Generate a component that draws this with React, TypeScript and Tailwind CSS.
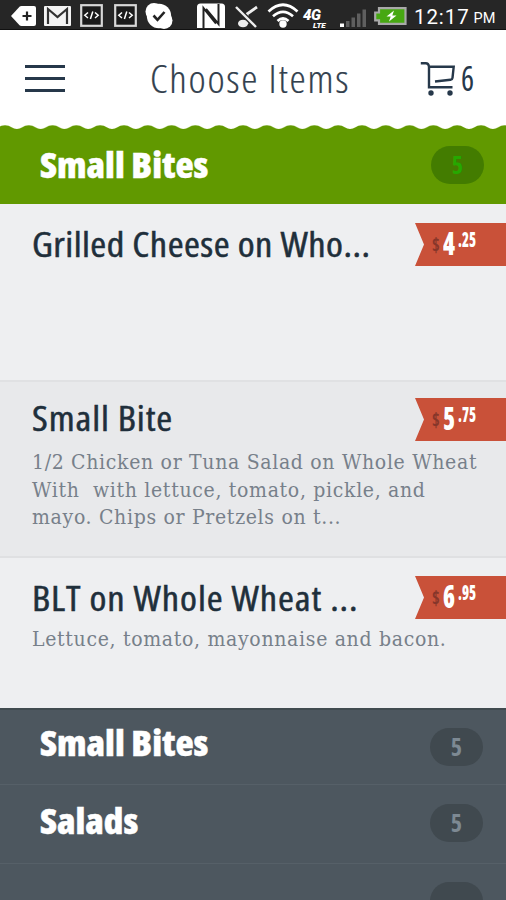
import type { ReactNode } from "react";
import clsx from "clsx";

interface MenuItem {
  name: string;
  dollars: string;
  cents: string;
  lines: string[];
  rowClass: string;
  nameClass: string;
  priceClass: string;
  descClass: string;
}

const items: MenuItem[] = [
  {
    name: "Grilled Cheese on Who...",
    dollars: "4",
    cents: ".25",
    lines: [],
    rowClass: "h-[178px] bg-[#eeeff1] border-b-2 border-[#e0e1e3]",
    nameClass: "mt-5 tracking-[0.4px]",
    priceClass: "mt-[19px]",
    descClass: "",
  },
  {
    name: "Small Bite",
    dollars: "5",
    cents: ".75",
    lines: [
      "1/2 Chicken or Tuna Salad on Whole Wheat",
      "With  with lettuce, tomato, pickle, and",
      "mayo. Chips or Pretzels on t...",
    ],
    rowClass: "h-[176px] bg-[#e8e9eb] border-b-2 border-[#dfe0e2]",
    nameClass: "mt-4 tracking-[0.8px]",
    priceClass: "mt-4",
    descClass: "pt-[10px]",
  },
  {
    name: "BLT on Whole Wheat ...",
    dollars: "6",
    cents: ".95",
    lines: ["Lettuce, tomato, mayonnaise and bacon."],
    rowClass: "h-[150px] bg-[#eeeff1]",
    nameClass: "mt-5 tracking-[0.8px]",
    priceClass: "mt-[18px]",
    descClass: "pt-[11px]",
  },
];

function CodeIcon({ className }: { className?: string }) {
  return (
    <svg viewBox="0 0 23 23" className={clsx("h-[23px] w-[23px] shrink-0", className)} fill="none">
      <rect x="1.2" y="1.2" width="20.6" height="20.6" fill="#1b1b1b" stroke="#d8d8d8" strokeWidth="2.2" />
      <path d="M8 8.5 4.8 11.3 8 14M15 8.5l3.2 2.8L15 14M12.8 7.5l-2.4 7.5" stroke="#fff" strokeWidth="1.5" />
    </svg>
  );
}

function StatusBar() {
  return (
    <div className="flex h-[30px] items-start overflow-hidden border-b border-[#111] bg-[#262626] pt-1 pl-[11px] text-white">
      <svg viewBox="0 0 25 20" className="mt-[2px] h-5 w-[25px] shrink-0">
        <path d="M0 10 8.5.8Q9.3 0 10.5 0H23q2 0 2 2v16q0 2-2 2H10.500Q9.300 20 8.500 19.200Z" fill="#fff" />
        <path d="M16 5.500v9M11.500 10h9" stroke="#222" strokeWidth="2.200" />
      </svg>
      <svg viewBox="0 0 27 20" className="mt-[2px] ml-2 h-5 w-[27px] shrink-0">
        <rect width="27" height="20" rx="1" fill="#f4f4f4" />
        <path d="M4 18V3l9.500 8L23 3v15" fill="none" stroke="#333" strokeWidth="2.200" />
      </svg>
      <CodeIcon className="ml-[9px]" />
      <CodeIcon className="ml-[11px]" />
      <svg viewBox="0 0 28 26" className="-mt-[1px] ml-2 h-[26px] w-7 shrink-0">
        <circle cx="9" cy="8.500" r="8.500" fill="#fff" />
        <circle cx="19" cy="17.500" r="8.500" fill="#fff" />
        <circle cx="14" cy="13" r="12.200" fill="#fff" />
        <path d="m8.500 12.500 4 4.300 7-7.800" fill="none" stroke="#222" strokeWidth="2.600" />
      </svg>
      <svg viewBox="0 0 28 26" className="-mt-[1px] ml-6 h-[26px] w-7 shrink-0">
        <path d="M0 25V4Q0 .5 3.500.5H24.500Q28 .5 28 4v21Z" fill="#fff" />
        <path d="M6.500 25V5L19 20.500M21.500 1v20L9 6" fill="none" stroke="#222" strokeWidth="2" />
      </svg>
      <svg viewBox="0 0 25 24" className="ml-[9px] h-6 w-[25px] shrink-0" fill="none">
        <path d="M13 20V10l10-7" stroke="#eee" strokeWidth="2.800" />
        <ellipse cx="9" cy="19.500" rx="5" ry="3.800" fill="#eee" />
        <path d="m2 3 20 20" stroke="#262626" strokeWidth="5" />
        <path d="m2 3 20 20" stroke="#eee" strokeWidth="2.400" />
      </svg>
      <svg viewBox="0 0 32 25" className="-mt-[1px] ml-2 h-[25px] w-8 shrink-0" fill="none" stroke="#fff" strokeWidth="2.700">
        <path d="M1.500 8.500q14.500-13.500 29 0M6 13.300q10-9 20 0M10.500 18q5.500-5 11 0" />
        <circle cx="16" cy="21" r="3.700" fill="#fff" stroke="none" />
      </svg>
      <div className="mt-[5px] ml-1 flex w-[30px] shrink-0 flex-col font-['Roboto',sans-serif] font-black italic [font-stretch:100%]">
        <span className="text-[15px] leading-[13px] tracking-[-0.5px]">4G</span>
        <span className="ml-[10px] text-[8px] leading-[8px]">LTE</span>
      </div>
      <svg viewBox="0 0 27 20" className="mt-1 ml-[7px] h-5 w-[27px] shrink-0" fill="#5f5f5f">
        <path d="M0 15.500h4V19H0z" fill="#fff" />
        <path d="M6 13h3.500v6H6zM11.500 9.500H15V19h-3.500zM17 5.500h3.500V19H17zM22.500 1.500H26V19h-3.500z" />
      </svg>
      <svg viewBox="0 0 33 18" className="mt-[3px] ml-[7px] h-[18px] w-[33px] shrink-0">
        <path d="M5 1.200h26.500v15.600H5v-3.500H1.200V5.500H5Z" fill="#47a812" stroke="#a9a9a9" strokeWidth="2.200" />
        <path d="m20 3.500-7.500 6h4.200L15 14.500l7.500-6h-4.200Z" fill="#fff" />
      </svg>
      <span className="ml-[7px] text-[20.500px] leading-[26px] tracking-[0.9px] font-['Roboto',sans-serif] [font-stretch:100%]">12:17</span>
      <span className="ml-1 pt-[1px] text-[14.500px] leading-[27px] font-['Roboto',sans-serif] [font-stretch:100%]">PM</span>
    </div>
  );
}

function Header() {
  return (
    <header className="flex h-[95px] items-start bg-white pl-[25px] text-[#26384a]">
      <div className="mt-[35px] flex w-10 shrink-0 flex-col gap-[9px]">
        <div className="h-[3px] bg-[#26384a]" />
        <div className="h-[3px] bg-[#26384a]" />
        <div className="h-[3px] bg-[#26384a]" />
      </div>
      <h1 className="mt-7 ml-[85px] w-[270px] shrink-0 origin-left scale-x-[1.08] text-[38px] leading-10 font-light tracking-[1.600px] whitespace-nowrap text-[#33414e] [-webkit-text-stroke:0.2px]">
        Choose Items
      </h1>
      <svg viewBox="0 0 36 35" className="mt-8 h-[35px] w-9 shrink-0" fill="none" stroke="#26384a" strokeWidth="2.400">
        <path d="M.8 1.300h5q2.700 0 3.200 3.400V25.200h23.500M9 4.800h24.700l-1.200 11q-.2 1.800-2 2L15 19.500" />
        <circle cx="11" cy="31" r="2.700" fill="#26384a" stroke="none" />
        <circle cx="30" cy="31" r="2.700" fill="#26384a" stroke="none" />
      </svg>
      <span className="mt-7 ml-[5px] origin-left scale-x-[0.88] text-[35px] leading-10">6</span>
    </header>
  );
}

function Scallops() {
  return (
    <svg className="block h-[4px] w-full" aria-hidden="true">
      <defs>
        <pattern id="scallop" x="-7" width="23.800" height="4" patternUnits="userSpaceOnUse">
          <path d="M0 4Q3 4 5.500 2.200Q8 .2 12 .2T18.500 2.200Q21 4 23.800 4Z" fill="#619900" />
        </pattern>
      </defs>
      <rect width="100%" height="4" fill="url(#scallop)" />
    </svg>
  );
}

function Pill({ className, children }: { className?: string; children?: ReactNode }) {
  return (
    <span className={clsx("flex h-[38px] w-[53px] shrink-0 items-center justify-center rounded-full text-2xl font-bold", className)}>
      {children}
    </span>
  );
}

function SectionName({ className, children }: { className?: string; children: ReactNode }) {
  return (
    <span
      className={clsx(
        "origin-left scale-x-[1.07] text-[35px] leading-10 font-extrabold whitespace-nowrap text-white [-webkit-text-stroke:0.4px]",
        className
      )}
    >
      {children}
    </span>
  );
}

function PriceTag({ item }: { item: MenuItem }) {
  return (
    <div
      className={clsx(
        "flex h-[43px] w-[91px] shrink-0 items-start bg-[#c95139] pl-[17px] font-extrabold [clip-path:polygon(0_0,100%_0,100%_100%,0_100%,9px_50%)]",
        item.priceClass
      )}
    >
      <span className="mt-[10px] w-[11px] origin-left scale-x-[0.82] text-xl leading-6 font-bold text-[#86362a]">$</span>
      <span className="mt-2 w-[15px] origin-left scale-x-[0.76] text-[32px] leading-6 text-white">{item.dollars}</span>
      <span className="mt-1 origin-left scale-x-[0.68] text-[21px] leading-6 text-white">{item.cents}</span>
    </div>
  );
}

function ItemRow({ item }: { item: MenuItem }) {
  return (
    <div className={clsx("pl-8", item.rowClass)}>
      <div className="flex h-[57px] items-start justify-between">
        <h2
          className={clsx(
            "origin-left scale-x-[1.1] text-[35px] leading-10 font-medium whitespace-nowrap text-[#1f2f3b] [-webkit-text-stroke:0.5px]",
            item.nameClass
          )}
        >
          {item.name}
        </h2>
        <PriceTag item={item} />
      </div>
      <div className={item.descClass}>
        {item.lines.map((line) => (
          <p
            key={line}
            className="font-['DejaVu_Serif_Condensed','DejaVu_Serif',serif] text-[21px] leading-[27.600px] tracking-[0.68px] whitespace-pre text-[#77808a]"
          >
            {line}
          </p>
        ))}
      </div>
    </div>
  );
}

export default function App() {
  return (
    <div className="h-[900px] w-[506px] overflow-hidden bg-white font-['Open_Sans',sans-serif] [font-stretch:75%]">
      <StatusBar />
      <Header />
      <Scallops />
      <div className="flex h-[75px] items-start justify-between bg-[#619900] pr-[22px] pl-10">
        <SectionName className="mt-4">Small Bites</SectionName>
        <Pill className="mt-[17px] bg-[#437c00] text-[#26a800]">5</Pill>
      </div>
      {items.map((item) => (
        <ItemRow key={item.name} item={item} />
      ))}
      <div className="bg-[#4d575f]">
        <div className="flex h-[77px] items-start justify-between border-t-2 border-b border-t-[#414b50] border-b-[#566068] pr-[23px] pl-10">
          <SectionName className="mt-[13px]">Small Bites</SectionName>
          <Pill className="mt-[18px] bg-[#40494f] text-[#7d8993]">5</Pill>
        </div>
        <div className="flex h-[79px] items-start justify-between border-b border-[#566068] pr-[23px] pl-10">
          <SectionName className="mt-4">Salads</SectionName>
          <Pill className="mt-[19px] bg-[#40494f] text-[#7d8993]">5</Pill>
        </div>
        <div className="flex h-[77px] items-start justify-end pr-[23px]">
          <Pill className="mt-[18px] bg-[#40494f]" />
        </div>
      </div>
    </div>
  );
}
